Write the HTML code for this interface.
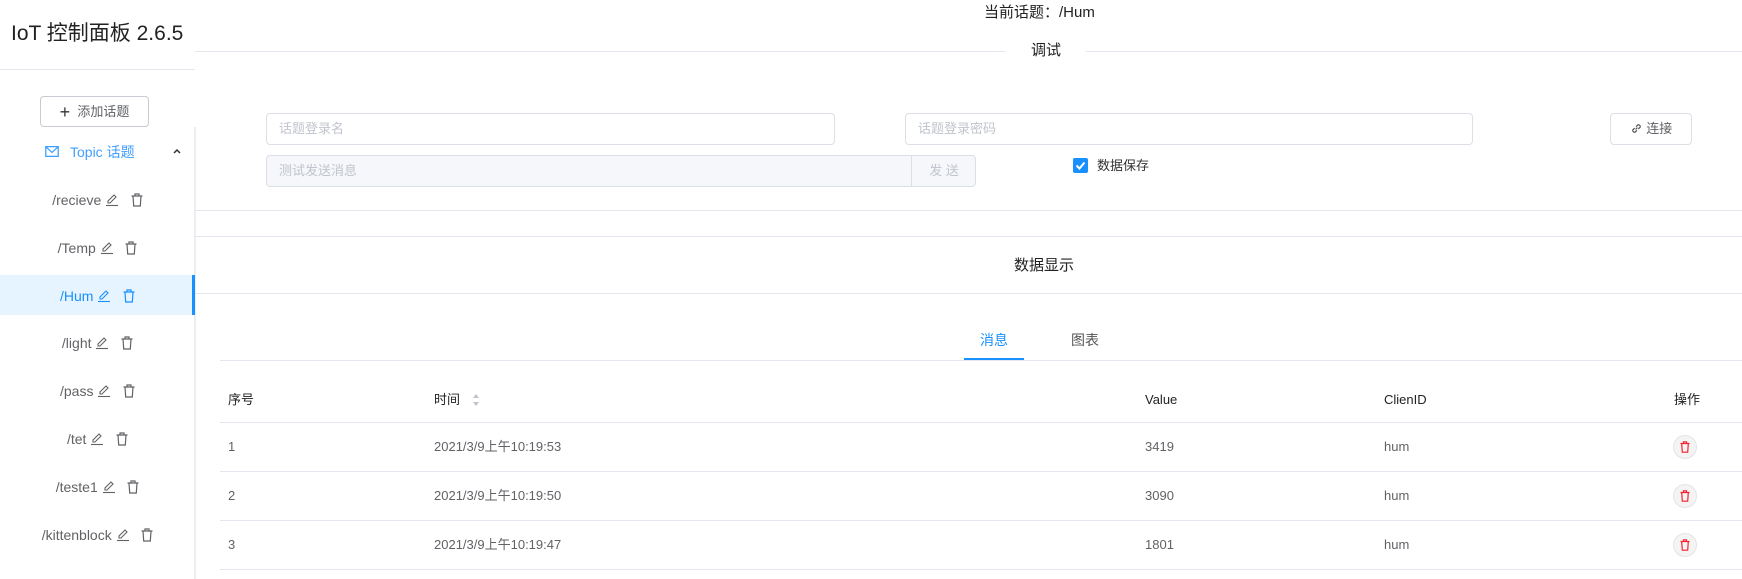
<!DOCTYPE html>
<html><head><meta charset="utf-8"><style>
*{box-sizing:border-box;margin:0;padding:0}
body{width:1742px;height:579px;overflow:hidden;background:#fff;font-family:"Liberation Sans","Noto Sans CJK SC",sans-serif;font-size:14px;color:#606266;position:relative}
.a{position:absolute;white-space:nowrap;line-height:20px}
.hl{position:absolute;height:1px;background:#e4e7ed}
.inp{position:absolute;border:1px solid #dcdfe6;border-radius:4px;height:32px;padding-left:12px;line-height:30px;color:#c0c4cc;font-size:13px}
.row{position:absolute;left:0;width:195px;height:40px;line-height:40px;text-align:center}
.del{position:absolute;width:24px;height:24px;border-radius:50%;background:#f4f4f5;border:1px solid #e4e4e4}
.th{color:#222;font-size:13px;font-weight:normal}
</style></head><body>
<div class="a" style="left:11px;top:22px;font-size:21px;line-height:24px;color:#222">IoT 控制面板 2.6.5</div>
<div class="hl" style="left:0;top:69px;width:195px"></div>
<div class="hl" style="left:195px;top:51px;width:811px"></div>
<div class="hl" style="left:1086px;top:51px;width:656px"></div>
<div style="position:absolute;left:194px;top:127px;width:2px;height:452px;background:#eceef2"></div>
<div class="a" style="left:40px;top:96px;width:109px;height:31px;border:1px solid #c8cbd2;border-radius:4px;line-height:29px;text-align:center;font-size:13px;color:#606266"><span style="font-size:18px;color:#333;vertical-align:-2px">+</span>&nbsp; 添加话题</div>
<svg class="a" style="left:45px;top:146px" width="14" height="11" viewBox="0 0 15 12"><rect x="0.7" y="0.7" width="13.6" height="10.6" fill="none" stroke="#409eff" stroke-width="1.4"/><path d="M1 1 L7.5 7 L14 1" fill="none" stroke="#409eff" stroke-width="1.4"/></svg>
<div class="a" style="left:70px;top:142px;color:#409eff;font-size:14px">Topic 话题</div>
<svg class="a" style="left:173px;top:148px" width="8" height="6"><path d="M1 5 L4 2 L7 5" fill="none" stroke="#333" stroke-width="1.5"/></svg>
<div style="position:absolute;left:0;top:275px;width:195px;height:40px;background:#e6f4ff"></div>
<div style="position:absolute;left:192px;top:275px;width:3px;height:40px;background:#1890ff"></div>
<div id="rows"></div>
<div class="a" style="left:984px;top:3px;font-size:15px;color:#222">当前话题：/Hum</div>
<div class="a" style="left:1031px;top:41px;font-size:15px;color:#222">调试</div>
<div class="inp" style="left:266px;top:113px;width:569px">话题登录名</div>
<div class="inp" style="left:905px;top:113px;width:568px">话题登录密码</div>
<div class="a" style="left:1610px;top:113px;width:82px;height:32px;border:1px solid #dcdfe6;border-radius:4px;text-align:center;line-height:30px;color:#606266;font-size:13px"><svg width="13" height="13" style="vertical-align:-2px" viewBox="0 0 14 14"><path d="M6 8 L8 6 M5 6.5 L3 8.5 A2.1 2.1 0 0 0 5.5 11 L7.5 9 M9 7.5 L11 5.5 A2.1 2.1 0 0 0 8.5 3 L6.5 5" fill="none" stroke="#555" stroke-width="1.3"/></svg> 连接</div>
<div class="inp" style="left:266px;top:155px;width:710px;background:#f5f7fa;color:#c0c4cc">测试发送消息</div>
<div class="a" style="left:911px;top:155px;width:65px;height:32px;border-left:1px solid #dcdfe6;text-align:center;line-height:32px;color:#c0c4cc;font-size:13px">发 送</div>
<div class="a" style="left:1073px;top:158px;width:15px;height:15px;background:#1890ff;border-radius:2px"></div>
<svg class="a" style="left:1073px;top:158px" width="15" height="15"><path d="M3.5 7.5 L6.5 10.5 L11.5 4.5" fill="none" stroke="#fff" stroke-width="2"/></svg>
<div class="a" style="left:1097px;top:156px;font-size:13px;color:#333">数据保存</div>
<div class="hl" style="left:195px;top:210px;width:1547px"></div>
<div class="hl" style="left:195px;top:236px;width:1547px"></div>
<div class="a" style="left:1014px;top:256px;font-size:15px;color:#222">数据显示</div>
<div class="hl" style="left:195px;top:293px;width:1547px"></div>
<div class="a" style="left:980px;top:330px;color:#1890ff">消息</div>
<div class="a" style="left:1071px;top:330px;color:#555">图表</div>
<div class="hl" style="left:220px;top:360px;width:1522px"></div>
<div class="a" style="left:964px;top:358px;width:60px;height:2px;background:#1890ff"></div>
<div class="a th" style="left:228px;top:390px">序号</div>
<div class="a th" style="left:434px;top:390px">时间</div>
<svg class="a" style="left:472px;top:393px" width="8" height="14"><path d="M4 1 L7 5 L1 5Z M4 13 L7 9 L1 9Z" fill="#c0c4cc"/></svg>
<div class="a th" style="left:1145px;top:390px">Value</div>
<div class="a th" style="left:1384px;top:390px">ClienID</div>
<div class="a th" style="left:1674px;top:390px">操作</div>
<div class="hl" style="left:220px;top:422px;width:1522px"></div>
<div id="trows"></div>
<script>
var r=[["/recieve",200],["/Temp",248],["/Hum",296],["/light",343],["/pass",391],["/tet",439],["/teste1",487],["/kittenblock",535]],h="";
r.forEach(function(x){var c=x[0]=="/Hum"?"#1890ff":"#606266";
h+='<div class="row" style="top:'+(x[1]-20)+'px;color:'+c+'">'+x[0]+' <svg width="14" height="14" style="vertical-align:-2px"><path d="M3 10 L3 8 L9 2 L11 4 L5 10Z" fill="none" stroke="'+c+'" stroke-width="1.1"/><path d="M1 12.5 H13" stroke="'+c+'" stroke-width="1.1"/></svg>&nbsp;&nbsp;&nbsp;<svg width="12" height="14" style="vertical-align:-2px"><path d="M0.5 3 H11.5 M4 3 V1 H8 V3 M2 3 L2.7 13 H9.3 L10 3" fill="none" stroke="'+c+'" stroke-width="1.2"/></svg></div>';});
document.getElementById("rows").innerHTML=h;
var t=[["1","2021/3/9上午10:19:53","3419",447],["2","2021/3/9上午10:19:50","3090",496],["3","2021/3/9上午10:19:47","1801",545]],g="";
t.forEach(function(x){var y=x[3];var s='px;font-size:13px;line-height:18px;top:'+(y-9)+'px">';g+='<div class="a" style="left:228'+s+x[0]+'</div><div class="a" style="left:434'+s+x[1]+'</div><div class="a" style="left:1145'+s+x[2]+'</div><div class="a" style="left:1384'+s+'hum</div><div class="del" style="left:1673px;top:'+(y-12)+'px"></div><svg class="a" style="left:1680px;top:'+(y-6)+'px" width="10" height="12"><path d="M0.5 2.5 H9.5 M3.5 2.5 V0.8 H6.5 V2.5 M1.7 2.5 L2.3 11.2 H7.7 L8.3 2.5" fill="none" stroke="#f5222d" stroke-width="1.2"/></svg><div class="hl" style="left:220px;top:'+(y+24)+'px;width:1522px"></div>';});
document.getElementById("trows").innerHTML=g;
</script>
</body></html>
